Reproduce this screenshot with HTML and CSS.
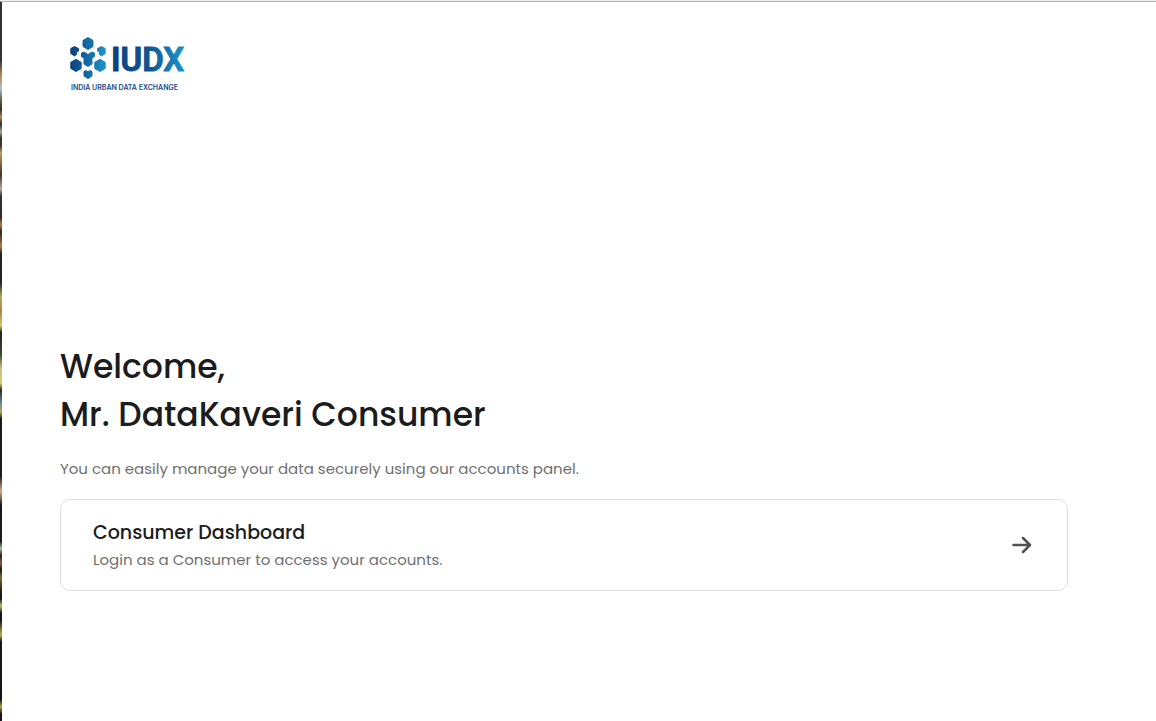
FILE: index.html
```html
<!DOCTYPE html>
<html lang="en">
<head>
<meta charset="utf-8">
<meta name="viewport" content="width=device-width, initial-scale=1">
<title>IUDX Accounts</title>
<link rel="stylesheet" href="styles.css">
</head>
<body>
<div class="page">
  <div class="photo-edge"></div>
  <main class="panel">
    <header class="brand">
      <svg class="brand-logo" viewBox="0 0 116 56" role="img" aria-label="IUDX, India Urban Data Exchange">
        <defs>
          <linearGradient id="mark" gradientUnits="userSpaceOnUse" x1="2" y1="0" x2="38" y2="0">
            <stop offset="0" stop-color="#0b3f7d"/>
            <stop offset="1" stop-color="#1c96cc"/>
          </linearGradient>
          <linearGradient id="word" gradientUnits="userSpaceOnUse" x1="43" y1="0" x2="114" y2="0">
            <stop offset="0" stop-color="#0b3f7d"/>
            <stop offset="0.500" stop-color="#10528f"/>
            <stop offset="1" stop-color="#1a8fc6"/>
          </linearGradient>
        </defs>
        <g fill="url(#mark)" stroke="url(#mark)" stroke-width="1" stroke-linejoin="round">
          <path d="M20 1.500L25 4.500V10.500L20 13.500L15 10.500V4.500Z"/>
          <path d="M8 23.300L13.200 26.300V32.500L8 35.500L2.800 32.500V26.300Z"/>
          <path d="M32 23.300L37.200 26.300V32.500L32 35.500L26.800 32.500V26.300Z"/>
          <path d="M16 35.500L18 34.500L20 36L22 34.500L24 35.500V40L20 42.500L16 40Z"/>
          <path d="M6.500 10.500L10.500 12.500V15L8.500 16.500V18.500L6.500 20L2.800 17.500V12.500Z"/>
          <path d="M33.500 10.500L37.200 12.500V17.500L33.500 20L31.500 18.500V16.500L29.500 15V12.500Z"/>
          <path d="M16 16L20 18.500L24 16L26.500 17V20.500L24 22V28L20 30.500L16 28V22L13.500 20.500V17Z"/>
        </g>
        <text class="logo-word" x="43" y="35">IUDX</text>
        <text class="logo-name" x="3" y="54">INDIA URBAN DATA EXCHANGE</text>
      </svg>
    </header>
    <section class="welcome">
      <h1 class="greeting">Welcome,<br>Mr. DataKaveri Consumer</h1>
      <p class="intro">You can easily manage your data securely using our accounts panel.</p>
      <a class="card" href="#consumer">
        <span class="card-text">
          <span class="card-title">Consumer Dashboard</span>
          <span class="card-note">Login as a Consumer to access your accounts.</span>
        </span>
        <svg class="card-arrow" viewBox="0 0 20 18" aria-hidden="true">
          <path d="M1.500 9H18M11 2L18 9L11 16"/>
        </svg>
      </a>
    </section>
  </main>
</div>
</body>
</html>
```
FILE: styles.css
```css
* { box-sizing: border-box; }

body {
  margin: 0;
  background: #fff;
  color: #1c1c1c;
  font-family: Poppins, Inter, "Noto Sans", sans-serif;
}

.page {
  display: flex;
  min-height: 100vh;
  padding-top: 1px;
  background: #efefef;
}

.photo-edge {
  flex: none;
  width: 2px;
  border-top: 1px solid #999;
  background: linear-gradient(#303030 0, #303030 8%, #b08052 10%, #a8c0c4 12%, #594c2d 14%, #333 15%, #b18458 16%, #2c2927 17%, #aaa195 18%, #39331e 19%, #3b3835 20%, #c6965e 21%, #403329 24%, #b5aaa0 26%, #35302d 27%, #302b28 30%, #b47842 31%, #29251f 32%, #b27a42 34%, #25221f 35%, #222528 39%, #adad58 41%, #b47e4d 43%, #cace66 45%, #24221f 46%, #3a4733 49%, #d5bc82 51%, #d2d16a 53%, #252927 54%, #71949b 56%, #b1a64b 57%, #181a1b 58%, #1a1b1b 66%, #d6ad8a 68%, #15191c 70%, #151b22 75%, #a6bda0 76%, #242018 77%, #8b583b 78%, #15191a 79%, #796e2f 80%, #1c1d19 82%, #151716 83%, #c1bb67 84%, #171717 85%, #171717 86%, #b4b34e 88%, #181818 89%, #151515 97%, #a7a13d 98%, #171717 99%);
}

.panel {
  display: flex;
  flex: 1;
  flex-direction: column;
  padding: 34px 88px 130px 58px;
  border-top: 1px solid #b5b5b5;
  background: #fff;
}

.brand { padding-left: 8px; }

.brand-logo {
  display: block;
  width: 116px;
  height: 56px;
  overflow: visible;
}

.logo-word {
  fill: url(#word);
  stroke: url(#word);
  stroke-width: 1;
  stroke-linejoin: round;
  font: 600 33px Roboto, sans-serif;
}

.logo-name {
  fill: #174b88;
  font: 600 7px Inter, sans-serif;
}

.welcome { margin-top: auto; }

.greeting {
  margin: 0;
  font-size: 33px;
  font-weight: 500;
  line-height: 48px;
}

.intro {
  margin: 20px 0;
  color: #707070;
  font-size: 15px;
  line-height: 20px;
}

.card {
  display: flex;
  align-items: center;
  justify-content: space-between;
  padding: 20px 35px 20px 32px;
  border: 1px solid #dedede;
  border-radius: 10px;
  color: inherit;
  text-decoration: none;
}

.card-text {
  display: flex;
  flex-direction: column;
  gap: 4px;
}

.card-title {
  font-size: 19px;
  font-weight: 500;
  line-height: 26px;
}

.card-note {
  color: #707070;
  font-size: 15px;
  line-height: 20px;
}

.card-arrow {
  flex: none;
  width: 20px;
  height: 18px;
  fill: none;
  stroke: #505050;
  stroke-width: 2.500;
  stroke-linecap: round;
  stroke-linejoin: round;
}
```
